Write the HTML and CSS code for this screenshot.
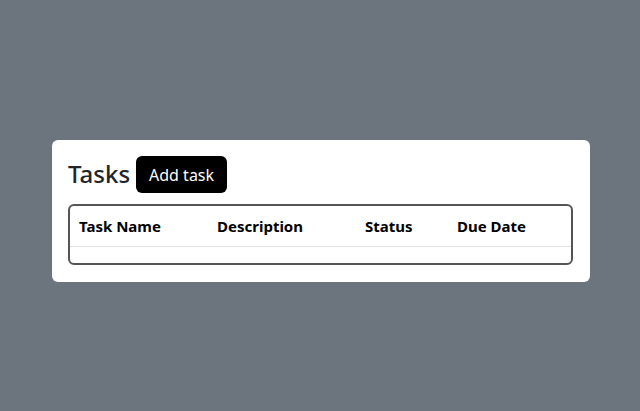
FILE: index.html
```html
<!DOCTYPE html>
<html>
<head>
<meta charset="utf-8">
<link rel="stylesheet" href="styles.css">
</head>
<body>
<div class="page">
  <div class="card">
    <div class="head">
      <h1 class="title">Tasks</h1>
      <button class="btn">Add task</button>
    </div>
    <div class="table-wrap">
      <table class="tbl">
        <thead>
          <tr>
            <th class="c1">Task Name</th>
            <th class="c2">Description</th>
            <th class="c3">Status</th>
            <th class="c4">Due Date</th>
          </tr>
        </thead>
        <tbody>
          <tr class="empty"><td colspan="4"></td></tr>
        </tbody>
      </table>
    </div>
  </div>
</div>
</body>
</html>
```
FILE: styles.css
```css
html, body {
  margin: 0;
  padding: 0;
}
body {
  background: #6c757d;
  font-family: "Noto Sans", "Open Sans", sans-serif;
  color: #212529;
  height: 411px;
}
.page {
  padding: 140px 0 0 52px;
}
.card {
  width: 538px;
  box-sizing: border-box;
  background: #fff;
  border-radius: 6px;
  padding: 16px 16px 17px 16px;
}
.head {
  display: flex;
  align-items: center;
  gap: 6px;
  margin-bottom: 11px;
  height: 37px;
}
.title {
  margin: 0;
  font-size: 24px;
  font-weight: 500;
  line-height: 1.2;
  color: #212529;
}
.btn {
  background: #000;
  color: #fff;
  border: none;
  border-radius: 6px;
  font-family: inherit;
  font-size: 16px;
  height: 37px;
  padding: 0 13px;
}
.table-wrap {
  border: 2px solid #555;
  border-radius: 6px;
  overflow: hidden;
  width: 505px;
  box-sizing: border-box;
}
.tbl {
  width: 100%;
  border-collapse: collapse;
}
.tbl th {
  text-align: left;
  font-weight: 700;
  font-size: 15px;
  color: #000;
  padding: 8px 7px 9px 9px;
  height: 23px;
  border-bottom: 1px solid #dee2e6;
}
.c1 { width: 122px; }
.c2 { width: 132px; }
.c3 { width: 76px; }
.empty td {
  height: 16px;
  padding: 0;
}
```
